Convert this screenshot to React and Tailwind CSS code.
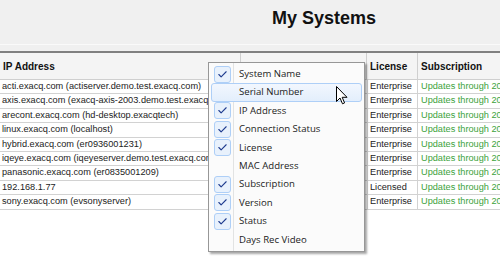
import { Check } from "lucide-react";

const ROWS = [
  { ip: "acti.exacq.com (actiserver.demo.test.exacq.com)", license: "Enterprise" },
  { ip: "axis.exacq.com (exacq-axis-2003.demo.test.exacq.com)", license: "Enterprise" },
  { ip: "arecont.exacq.com (hd-desktop.exacqtech)", license: "Enterprise" },
  { ip: "linux.exacq.com (localhost)", license: "Enterprise" },
  { ip: "hybrid.exacq.com (er0936001231)", license: "Enterprise" },
  { ip: "iqeye.exacq.com (iqeyeserver.demo.test.exacq.com)", license: "Enterprise" },
  { ip: "panasonic.exacq.com (er0835001209)", license: "Enterprise" },
  { ip: "192.168.1.77", license: "Licensed" },
  { ip: "sony.exacq.com (evsonyserver)", license: "Enterprise" },
];

const COLUMNS = [
  { label: "System Name", checked: true },
  { label: "Serial Number", checked: false, hover: true },
  { label: "IP Address", checked: true },
  { label: "Connection Status", checked: true },
  { label: "License", checked: true },
  { label: "MAC Address", checked: false },
  { label: "Subscription", checked: true },
  { label: "Version", checked: true },
  { label: "Status", checked: true },
  { label: "Days Rec Video", checked: false },
];

const grid = "grid grid-cols-[241px_126px_51px_1fr]";

function ColumnMenu() {
  return (
    <div className="absolute left-[208px] top-[62px] w-[157px] border border-[#979797] bg-[#fbfbfb] py-[2px] shadow-[2px_2px_2px_rgba(0,0,0,0.35)] font-['Open_Sans',sans-serif] text-[9.6px] text-[#1b1b1b]">
      {/* gutter line */}
      <div className="absolute left-[24px] top-0 bottom-0 w-px bg-[#e2e3e3]" />
      {COLUMNS.map((c) => (
        <div
          key={c.label}
          className={
            "relative flex h-[18.4px] items-center mx-[2px] rounded-[3px] border " +
            (c.hover
              ? "border-[#aecff7] bg-gradient-to-b from-[#f2f7fe] to-[#e3eefc]"
              : "border-transparent")
          }
        >
          <div className="w-[21px] flex justify-center">
            {c.checked && (
              <div className="w-[17px] h-[17px] rounded-[3px] border border-[#aecff7] bg-[#e8f1fc] flex items-center justify-center">
                <Check size={11} strokeWidth={2.4} className="text-[#1f3c8f]" />
              </div>
            )}
          </div>
          <span className="pl-[6px]">{c.label}</span>
        </div>
      ))}
    </div>
  );
}

function Cursor() {
  return (
    <svg className="absolute left-[336px] top-[86px]" width="12" height="19" viewBox="0 0 12 19">
      <path d="M0.5 0.5 L0.5 15.5 L4 12 L6.5 17.8 L8.6 16.9 L6.2 11.3 L11 11.3 Z" fill="#fff" stroke="#000" strokeWidth="1" strokeLinejoin="round" />
    </svg>
  );
}

export default function App() {
  return (
    <div className="relative w-[500px] h-[257px] overflow-hidden bg-white font-['Liberation_Sans',Arial,sans-serif]">
      <div className="h-[44px] bg-[#f0f0f0] flex items-start pt-[9px] pl-[272px]">
        <h1 className="text-[18px] font-bold text-[#111] leading-[18px]">My Systems</h1>
      </div>
      <div className="h-[7px] bg-[#f0f0f0] border-t border-[#fafafa]" />
      <div className="border-t-2 border-[#808080]">
        <div className={grid + " h-[27px] bg-[#f4f4f4] border-b border-[#cfcfcf] text-[10px] font-bold text-[#111]"}>
          <div className="flex items-center pl-[3px] border-r border-[#cfcfcf]">IP Address</div>
          <div className="border-r border-[#cfcfcf]" />
          <div className="flex items-center pl-[3px] border-r border-[#cfcfcf]">License</div>
          <div className="flex items-center pl-[3px]">Subscription</div>
        </div>
        {ROWS.map((r) => (
          <div key={r.ip} className={grid + " h-[14.4px] border-b border-[#d2d2d2] text-[9.2px] text-[#222] whitespace-nowrap"}>
            <div className="flex items-center pl-[2px] overflow-hidden">{r.ip}</div>
            <div />
            <div className="flex items-center pl-[2px] border-x border-[#d2d2d2]">{r.license}</div>
            <div className="flex items-center pl-[3px] text-[#3ca23c] overflow-hidden">Updates through 2015</div>
          </div>
        ))}
      </div>
      <ColumnMenu />
      <Cursor />
    </div>
  );
}
